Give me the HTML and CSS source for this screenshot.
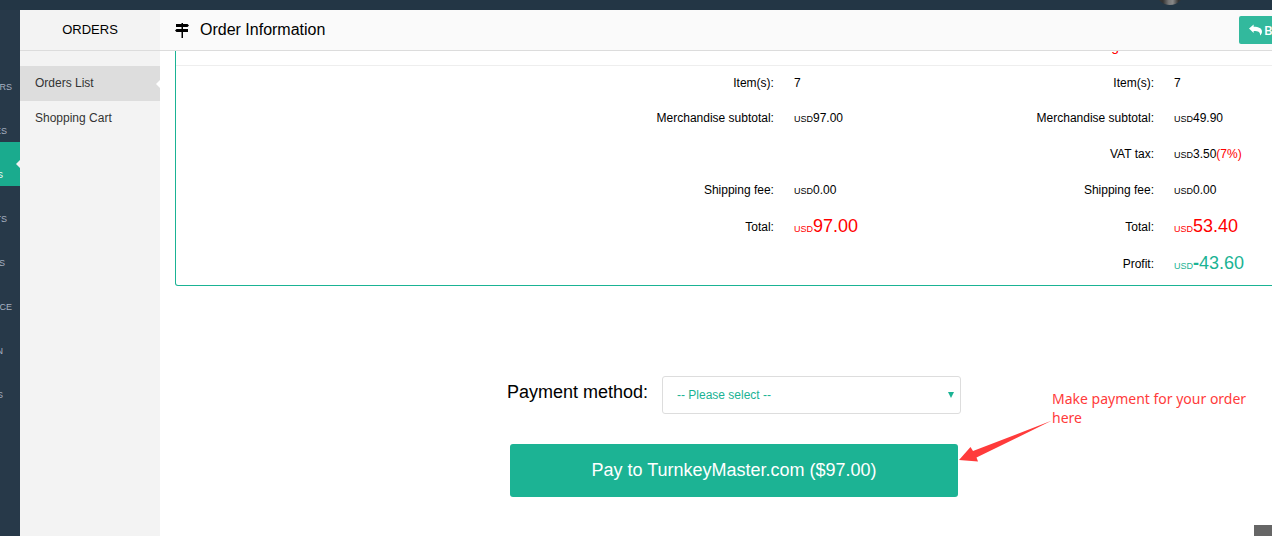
FILE: index.html
```
<!DOCTYPE html>
<html lang="en">
<head>
    <meta charset="UTF-8">
    <meta name="viewport" content="width=device-width, initial-scale=1.0">
    <title>Order Information</title>
    <link rel="stylesheet" href="styles.css">
</head>
<body>
    <div class="wrap">
        <div class="top_bar">
            <span class="avatar"></span>
        </div>
        <div class="content">
            <ul class="nav_ul">
                <li class="nav_li w_l"><a href="#">RS</a></li>
                <li class="nav_li w_m"><a href="#">ES</a></li>
                <li class="nav_li active"><a href="#">S</a></li>
                <li class="nav_li w_m"><a href="#">TS</a></li>
                <li class="nav_li w_s"><a href="#">S</a></li>
                <li class="nav_li w_l"><a href="#">NCE</a></li>
                <li class="nav_li"><a href="#">N</a></li>
                <li class="nav_li"><a href="#">S</a></li>
            </ul>
            <div class="side">
                <h2 class="side_title">ORDERS</h2>
                <ul class="side_ul">
                    <li class="side_li on"><a href="#">Orders List</a></li>
                    <li class="side_li"><a href="#">Shopping Cart</a></li>
                </ul>
            </div>
            <div class="main">
                <div class="main_inner">
                    <div class="main_head">
                        <svg class="sign" viewBox="0 0 14 15">
                            <path d="M6.500 0h1.500v1h4.500l1.500 1.500-1.500 1.500H1V1h5.500zM6.500 4h1.500v2h-1.500zM1.500 6H13v3H1.500L0 7.500zM6.500 9h1.500v6h-1.500z"/>
                        </svg>
                        <h1>Order Information</h1>
                        <button type="button" class="back_btn">
                            <svg viewBox="0 0 14 12">
                                <path d="M0 4.500L5 0v2.500c5.500 0 9 1.500 9 5.500 0 1.600-.9 3.100-2.100 4 .5-3.500-1.500-5-6.900-5V9.300z"/>
                            </svg>
                            Back
                        </button>
                    </div>
                    <div class="card">
                        <div class="card_head"><span>g</span></div>
                        <table class="sum">
                            <colgroup>
                                <col class="c_blank"><col class="c_label"><col class="c_value"><col class="c_label"><col class="c_value">
                            </colgroup>
                            <tr class="first">
                                <td></td>
                                <th>Item(s):</th><td>7</td>
                                <th>Item(s):</th><td>7</td>
                            </tr>
                            <tr>
                                <td></td>
                                <th>Merchandise subtotal:</th><td><small>USD</small>97.00</td>
                                <th>Merchandise subtotal:</th><td><small>USD</small>49.90</td>
                            </tr>
                            <tr>
                                <td></td>
                                <td></td><td></td>
                                <th>VAT tax:</th><td><small>USD</small>3.50<span class="red">(7%)</span></td>
                            </tr>
                            <tr>
                                <td></td>
                                <th>Shipping fee:</th><td><small>USD</small>0.00</td>
                                <th>Shipping fee:</th><td><small>USD</small>0.00</td>
                            </tr>
                            <tr class="total">
                                <td></td>
                                <th>Total:</th><td class="red"><small>USD</small><span class="big">97.00</span></td>
                                <th>Total:</th><td class="red"><small>USD</small><span class="big">53.40</span></td>
                            </tr>
                            <tr class="total">
                                <td></td>
                                <td></td><td></td>
                                <th>Profit:</th><td class="green"><small>USD</small><span class="big"><b>-</b>43.60</span></td>
                            </tr>
                        </table>
                    </div>
                    <form class="pay">
                        <div class="pay_row">
                            <label for="method">Payment method:</label>
                            <div class="select_box">
                                <select id="method">
                                    <option>-- Please select --</option>
                                </select>
                                <svg viewBox="0 0 6 6"><path d="M0 0h6L3 6z"/></svg>
                            </div>
                        </div>
                        <button type="button" class="pay_btn">Pay to TurnkeyMaster.com ($97.00)</button>
                        <!-- hint with arrow -->
                        <div class="hint">
                            <svg class="arrow" viewBox="0 0 94 42">
                                <path d="M0 40L11.500 27l2.500 4L93 0.500 17.500 37.500l1.500 4z"/>
                            </svg>
                            <p>Make payment for your order here</p>
                        </div>
                    </form>
                </div>
            </div>
        </div>
        <a href="#" class="go_top" aria-label="Top"></a>
    </div>
</body>
</html>
```

FILE: styles.css
```
*{
    margin: 0;
    padding: 0;
    list-style: none;
    box-sizing: border-box;
}
body{
    font-family: "Liberation Sans", Arial, sans-serif;
    font-size: 12px;
    color: #000;
    background: #fff;
}
a{
    color: inherit;
    text-decoration: none;
}
h1,h2,th{
    font-weight: 400;
}
.wrap{
    height: 100vh;
    display: flex;
    flex-direction: column;
    overflow: hidden;
    position: relative;
}
.top_bar{
    flex: none;
    height: 10px;
    background: #233645;
    display: flex;
    justify-content: flex-end;
    align-items: flex-end;
    padding: 0 88px 5px 0;
    overflow: hidden;
}
.avatar{
    width: 28px;
    height: 28px;
    flex: none;
    border-radius: 50%;
    background: linear-gradient(90deg, #333 25%, #777 45%, #888 60%, #333 80%);
}
.content{
    flex: 1;
    display: flex;
    min-height: 0;
}

/* left nav */
.nav_ul{
    flex: none;
    width: 20px;
    padding-top: 44px;
    background: #273949;
}
.nav_li{
    height: 44px;
    display: flex;
    justify-content: flex-end;
    align-items: flex-end;
    padding: 0 17px 6px 0;
    overflow: hidden;
    font-size: 9px;
    line-height: 10px;
    color: #a7b1c2;
    position: relative;
}
.nav_li.w_l{
    padding-right: 8px;
}
.nav_li.w_m{
    padding-right: 13px;
}
.nav_li.w_s{
    padding-right: 15px;
}
.nav_li.active{
    background: #1aab8e;
    color: #fff;
}
.nav_li.active::after,
.side_li.on::after{
    content: "";
    position: absolute;
    right: 0;
    top: 50%;
    margin-top: -4px;
    border: 4px solid transparent;
    border-left: 0;
    border-right-color: #f3f3f3;
}
.side_li.on::after{
    border-right-color: #fff;
}

/* sub menu */
.side{
    flex: none;
    width: 140px;
    background: #f3f3f3;
}
.side_title{
    height: 41px;
    line-height: 40px;
    font-size: 13px;
    text-align: center;
    border-bottom: 1px solid #dcdcdc;
}
.side_ul{
    padding-top: 15px;
}
.side_li{
    height: 35px;
    line-height: 35px;
    padding-left: 15px;
    color: #333;
    position: relative;
}
.side_li.on{
    background: #ddd;
}

/* main */
.main{
    flex: 1;
    min-width: 0;
    overflow: hidden;
}
.main_inner{
    width: calc(100% + 60px);
}
.main_head{
    height: 41px;
    display: flex;
    align-items: center;
    padding: 0 15px;
    background: #fafafa;
    border-bottom: 1px solid #dcdcdc;
}
.sign{
    width: 14px;
    height: 15px;
    margin-right: 11px;
}
.main_head h1{
    font-size: 16px;
}
.back_btn{
    margin-left: auto;
    width: 78px;
    height: 28px;
    padding-left: 10px;
    display: flex;
    align-items: center;
    gap: 2px;
    border: 0;
    border-radius: 2px;
    background: #32b99d;
    color: #fff;
    font: 600 13px "Open Sans", sans-serif;
}
.back_btn svg{
    width: 13px;
    height: 12px;
    fill: #fff;
}
.card{
    margin: 0 15px;
    padding-bottom: 3px;
    border: 1px solid #1ab394;
    border-top: 0;
    border-radius: 0 0 3px 3px;
}
.card_head{
    height: 15px;
    display: flex;
    justify-content: flex-end;
    align-items: flex-end;
    padding: 0 197px 11px 0;
    border-bottom: 1px solid #eee;
    overflow: hidden;
    font-size: 14px;
    line-height: 16px;
    color: #f00;
}
.sum{
    width: 100%;
    table-layout: fixed;
    border-collapse: collapse;
}
.c_blank{
    width: 33.33%;
}
.c_label{
    width: 20%;
}
.sum tr{
    height: 36px;
}
.sum .first{
    height: 34px;
}
.sum .total{
    height: 37px;
}
.sum th,.sum td{
    padding: 0 10px;
    text-align: left;
    vertical-align: middle;
}
.sum th{
    text-align: right;
}
.sum small{
    font-size: 9px;
}
.big{
    font-size: 18px;
}
.red{
    color: #f00;
}
.green{
    color: #1ab394;
}

/* payment */
.pay{
    width: 454px;
    margin: 90px auto 0;
    position: relative;
    right: 12px;
}
.pay_row{
    display: flex;
    justify-content: space-between;
}
.pay_row label{
    font-size: 18px;
    line-height: 32px;
}
.select_box{
    width: 299px;
    position: relative;
}
.select_box select{
    width: 100%;
    height: 38px;
    padding: 0 14px;
    appearance: none;
    border: 1px solid #ddd;
    border-radius: 3px;
    background: #fff;
    color: #1ab394;
    font: 12px "Liberation Sans", Arial, sans-serif;
}
.select_box svg{
    position: absolute;
    right: 7px;
    top: 16px;
    width: 6px;
    height: 6px;
    fill: #1ab394;
}
.pay_btn{
    display: block;
    width: 448px;
    height: 53px;
    margin: 30px auto 0;
    border: 0;
    border-radius: 3px;
    background: #1cb394;
    color: #fff;
    font: 18px "Liberation Sans", Arial, sans-serif;
}
.hint{
    position: absolute;
    left: 100%;
    top: 13px;
    width: 290px;
    padding-left: 91px;
    color: #ff3b3b;
    font: 14px/19px "Noto Sans", sans-serif;
}
.arrow{
    position: absolute;
    left: -2px;
    top: 31px;
    width: 94px;
    height: 42px;
    fill: #ff3b3b;
}
.go_top{
    position: absolute;
    right: 0;
    bottom: 0;
    width: 18px;
    height: 11px;
    background: #666;
}
```
